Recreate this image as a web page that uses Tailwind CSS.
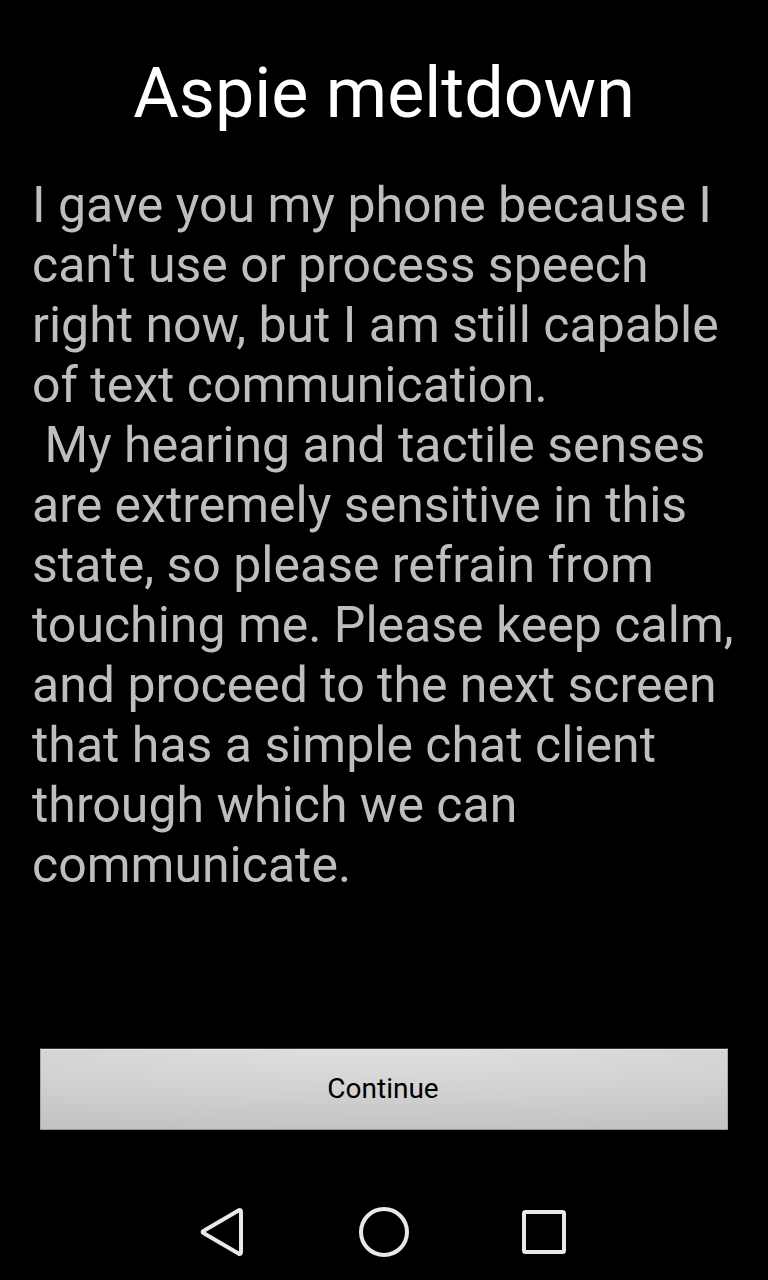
<!DOCTYPE html>
<html lang="en">
<head>
<meta charset="utf-8">
<meta name="viewport" content="width=device-width, initial-scale=1">
<title>Aspie meltdown</title>
<script src="https://cdn.jsdelivr.net/npm/@tailwindcss/browser@4"></script>
</head>
<body class="flex min-h-screen flex-col bg-black font-['Roboto',sans-serif]">
<main class="flex grow flex-col px-8 pt-12">
<h1 class="text-center text-[70px] leading-[90px] text-white">Aspie meltdown</h1>
<p class="mt-[37px] text-[50px] leading-[60px] whitespace-pre-line text-[#bebebe]">I gave you my phone because I can't use or process speech right now, but I am still capable of text communication.
&nbsp;My hearing and tactile senses are extremely sensitive in this state, so please refrain from touching me. Please keep calm, and proceed to the next screen that has a simple chat client through which we can communicate.</p>
<button type="button" class="mx-2 mt-auto mb-[54px] h-[82px] rounded-[1px] border border-x-[#a8a8a8] border-t-[#383838] border-b-[#909494] bg-[#c4c4c4] bg-[radial-gradient(ellipse_130%_100%_at_50%_0%,#e0e0e0,#c4c4c4)] pr-[2px] text-[28px] text-black shadow-[inset_0_1px_0_#e6e6e6]">Continue</button>
</main>
<nav aria-label="System navigation" class="flex h-24 justify-center gap-8">
<button type="button" aria-label="Back" class="flex w-32 items-center justify-center"><svg class="size-16" viewBox="0 0 64 64" fill="none" stroke="#e8e8e8" stroke-width="4" stroke-linejoin="round"><path d="M11.4 30.9 46.5 10.4Q49 9.2 49 12V52Q49 54.8 46.5 53.6L11.4 33.1Q9.8 32 11.4 30.9Z"/></svg></button>
<button type="button" aria-label="Home" class="flex w-32 items-center justify-center"><svg class="size-16" viewBox="0 0 64 64" fill="none" stroke="#e8e8e8" stroke-width="4"><circle cx="32" cy="32" r="23"/></svg></button>
<button type="button" aria-label="Recent apps" class="flex w-32 items-center justify-center"><svg class="size-16" viewBox="0 0 64 64" fill="none" stroke="#e8e8e8" stroke-width="4" stroke-linejoin="round"><rect x="12" y="12" width="40" height="40" rx="1.5"/></svg></button>
</nav>
</body>
</html>
